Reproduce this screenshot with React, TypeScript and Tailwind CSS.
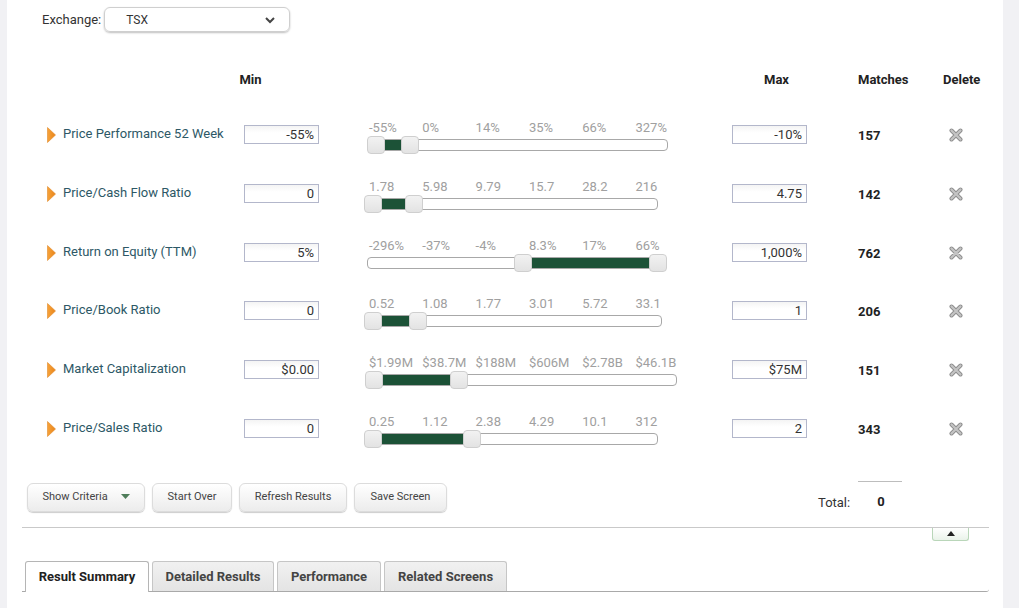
import React from "react";

type Criterion = {
  name: string;
  min: string;
  max: string;
  matches: number;
  ticks: string[];
  trackLeft: number; // offset inside slider column
  trackWidth: number;
  lo: number; // thumb left (px from track start)
  hi: number;
};

const criteria: Criterion[] = [
  { name: "Price Performance 52 Week", min: "-55%", max: "-10%", matches: 157, ticks: ["-55%", "0%", "14%", "35%", "66%", "327%"], trackLeft: 3, trackWidth: 301, lo: 0, hi: 34 },
  { name: "Price/Cash Flow Ratio", min: "0", max: "4.75", matches: 142, ticks: ["1.78", "5.98", "9.79", "15.7", "28.2", "216"], trackLeft: 0, trackWidth: 294, lo: 0, hi: 41 },
  { name: "Return on Equity (TTM)", min: "5%", max: "1,000%", matches: 762, ticks: ["-296%", "-37%", "-4%", "8.3%", "17%", "66%"], trackLeft: 3, trackWidth: 300, lo: 147, hi: 282 },
  { name: "Price/Book Ratio", min: "0", max: "1", matches: 206, ticks: ["0.52", "1.08", "1.77", "3.01", "5.72", "33.1"], trackLeft: 0, trackWidth: 298, lo: 0, hi: 45 },
  { name: "Market Capitalization", min: "$0.00", max: "$75M", matches: 151, ticks: ["$1.99M", "$38.7M", "$188M", "$606M", "$2.78B", "$46.1B"], trackLeft: 1, trackWidth: 312, lo: 0, hi: 85 },
  { name: "Price/Sales Ratio", min: "0", max: "2", matches: 343, ticks: ["0.25", "1.12", "2.38", "4.29", "10.1", "312"], trackLeft: 0, trackWidth: 294, lo: 0, hi: 99 },
];

const THUMB = 18;

function Arrow() {
  return (
    <svg width="9" height="16" viewBox="0 0 9 16" className="mt-[1px]">
      <defs>
        <linearGradient id="ar" x1="0" y1="0" x2="1" y2="0">
          <stop offset="0" stopColor="#f7a33a" />
          <stop offset="1" stopColor="#e8841a" />
        </linearGradient>
      </defs>
      <path d="M0.5 0.5 L8.5 8 L0.5 15.5 Z" fill="url(#ar)" stroke="#e08a2a" strokeWidth="0.6" />
    </svg>
  );
}

function DeleteIcon() {
  return (
    <svg width="14" height="14" viewBox="0 0 14 14">
      <path d="M2.5 2.5 L11.5 11.5 M11.5 2.5 L2.5 11.5" stroke="#8c8c8c" strokeWidth="4" strokeLinecap="round" />
      <path d="M2.5 2.5 L11.5 11.5 M11.5 2.5 L2.5 11.5" stroke="#c4c4c4" strokeWidth="2.2" strokeLinecap="round" />
    </svg>
  );
}

function ValueBox({ value }: { value: string }) {
  return (
    <div className="w-[75px] h-[19px] border border-[#b3b7cb] bg-gradient-to-b from-[#f4f4f4] to-white to-40% text-right pr-[4px] text-[13px] leading-[17px] text-[#333]">
      {value}
    </div>
  );
}

function Slider({ c }: { c: Criterion }) {
  return (
    <div className="w-[368px]">
      <div className="flex ml-[5px] h-[15px] text-[13px] leading-[15px] text-[#a0a0a0]">
        {c.ticks.map((t) => (
          <div key={t} className="w-[53.3px] shrink-0 whitespace-nowrap">
            {t}
          </div>
        ))}
      </div>
      <div
        className="relative mt-[4px] h-[12px] rounded-[4px] border border-[#a8a8a8] bg-white"
        style={{ marginLeft: c.trackLeft, width: c.trackWidth }}
      >
        <div
          className="absolute top-0 bottom-0 bg-[#1c5237]"
          style={{ left: c.lo + THUMB / 2, width: c.hi - c.lo }}
        />
        {[c.lo, c.hi].map((x, i) => (
          <div
            key={i}
            className="absolute top-[-4px] h-[18px] w-[18px] rounded-[4px] border border-[#cfcfcf] bg-gradient-to-b from-[#f2f2f2] to-[#e3e3e3]"
            style={{ left: x - 1 }}
          />
        ))}
      </div>
    </div>
  );
}

function Btn({ children, w }: { children: React.ReactNode; w: string }) {
  return (
    <button
      className={`h-[29px] ${w} rounded-[6px] border border-[#dcdcdc] bg-gradient-to-b from-white to-[#ececec] shadow-[0_1px_1px_rgba(0,0,0,0.2)] text-[11px] text-[#444] flex items-center justify-center gap-[13px]`}
    >
      {children}
    </button>
  );
}

export default function App() {
  return (
    <div className="w-[1019px] h-[608px] overflow-hidden bg-[#f1f1f4] font-['Roboto',sans-serif]">
      <div className="ml-[7px] w-[996px] h-[608px] bg-white relative">
        {/* Exchange */}
        <div className="flex items-center pt-[7px] pl-[35px]">
          <span className="text-[13px] text-[#333] mr-[3px]">Exchange:</span>
          <div className="w-[186px] h-[25px] rounded-[6px] border border-[#cfcfcf] shadow-[0_1px_2px_rgba(0,0,0,0.25)] flex items-center justify-between pl-[21px] pr-[14px]">
            <span className="text-[12px] text-[#333]">TSX</span>
            <svg width="10" height="8" viewBox="0 0 10 8">
              <path d="M1 2 L5 6 L9 2" fill="none" stroke="#444" strokeWidth="2" />
            </svg>
          </div>
        </div>

        {/* Column headers */}
        <div className="flex mt-[40px] h-[16px] text-[13px] font-bold text-[#222] leading-[16px]">
          <div className="w-[206px]" />
          <div className="w-[75px] text-center">Min</div>
          <div className="w-[451px]" />
          <div className="w-[75px] text-center">Max</div>
          <div className="w-[18px]" />
          <div className="w-[103px] pl-[26px]">Matches</div>
          <div className="pl-[8px]">Delete</div>
        </div>

        {/* Rows */}
        <div className="mt-[32px]">
          {criteria.map((c) => (
            <div key={c.name} className="flex items-start h-[58.8px] pl-[40px]">
              <div className="w-[16px] pt-[6px]">
                <Arrow />
              </div>
              <div className="w-[181px] pt-[6px] text-[13px] leading-[16px] text-[#2d5866]">{c.name}</div>
              <div className="pt-[5px]">
                <ValueBox value={c.min} />
              </div>
              <div className="w-[45px]" />
              <Slider c={c} />
              <div className="pt-[5px]">
                <ValueBox value={c.max} />
              </div>
              <div className="w-[51px]" />
              <div className="w-[91px] pt-[8px] text-[13px] leading-[16px] font-bold text-[#222]">{c.matches}</div>
              <div className="pt-[8px]">
                <DeleteIcon />
              </div>
            </div>
          ))}
        </div>

        {/* Buttons + total */}
        <div className="flex items-start h-[29px] mt-[10px] pl-[20px]">
          <div className="flex gap-[7px]">
            <Btn w="w-[118px]">
              Show Criteria
              <svg width="9" height="6" viewBox="0 0 9 6">
                <path d="M0 0 L9 0 L4.5 5 Z" fill="#4f7d5a" />
              </svg>
            </Btn>
            <Btn w="w-[80px]">Start Over</Btn>
            <Btn w="w-[108px]">Refresh Results</Btn>
            <Btn w="w-[93px]">Save Screen</Btn>
          </div>
          <div className="ml-[371px] mt-[-2px]">
            <div className="ml-[40px] w-[44px] h-[1px] bg-[#bdbdbd]" />
            <div className="flex items-center mt-[13px]">
              <span className="text-[13px] leading-[16px] text-[#333]">Total:</span>
              <span className="ml-[27px] text-[13px] leading-[16px] font-bold text-[#222] mt-[-2px]">0</span>
            </div>
          </div>
        </div>

        {/* Divider */}
        <div className="relative mt-[15px] ml-[15px] w-[967px] h-[1px] bg-[#c9c9c9]">
          <div className="absolute right-[20px] top-[1px] w-[37px] h-[13px] border border-t-0 border-[#b9d6b9] rounded-b-[3px] bg-gradient-to-b from-white to-[#eaf3ea] flex items-center justify-center">
            <svg width="8" height="5" viewBox="0 0 8 5">
              <path d="M0 5 L8 5 L4 0 Z" fill="#222" />
            </svg>
          </div>
        </div>

        {/* Tabs */}
        <div className="mt-[33px] ml-[15px] w-[967px] h-[31px] border-b border-[#a9a9a9] rounded-br-[3px] flex items-end pl-[3px] gap-[3px]">
          <div className="h-[31px] w-[124px] border border-b-0 border-[#b5b5b5] rounded-t-[3px] bg-white text-[13px] font-bold text-[#222] flex items-center justify-center mb-[-1px]">
            Result Summary
          </div>
          {["Detailed Results", "Performance", "Related Screens"].map((t, i) => (
            <div
              key={t}
              className={`h-[30px] border border-b-0 border-[#c6c6c6] rounded-t-[3px] bg-gradient-to-b from-[#f1f1f1] to-[#e4e4e4] text-[13px] font-bold text-[#444] flex items-center justify-center ${
                i === 0 ? "w-[122px]" : i === 1 ? "w-[104px]" : "w-[123px]"
              }`}
            >
              {t}
            </div>
          ))}
        </div>
      </div>
    </div>
  );
}
